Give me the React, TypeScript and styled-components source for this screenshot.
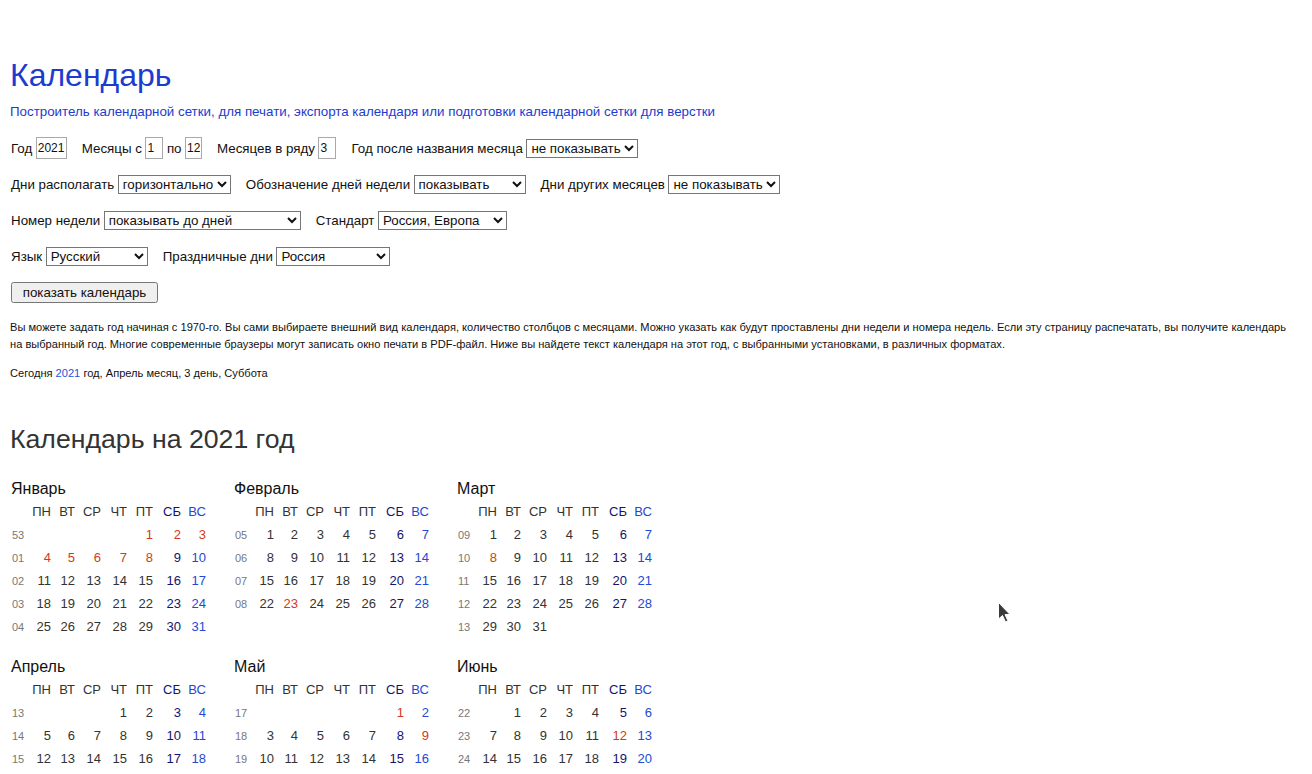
import React from 'react';
import styled, { createGlobalStyle } from 'styled-components';

const GlobalStyle = createGlobalStyle`
  html, body {
    margin: 0;
    padding: 0;
    background: #fff;
  }
  body {
    font-family: "Liberation Sans", Arial, sans-serif;
    color: #111;
  }
`;

const Page = styled.div`
  position: relative;
  padding: 57px 10px 40px 10px;
`;

const Title = styled.h1`
  margin: 0;
  font-size: 32px;
  line-height: 37px;
  font-weight: normal;
  color: #1d3bcf;
`;

const Subtitle = styled.div`
  margin-top: 10px;
  font-size: 13.33px;
  line-height: 15px;
  color: #1d3bcf;
`;

const Form = styled.form`
  margin: 18px 0 0 1px;
  display: flex;
  flex-direction: column;
  gap: 14px;
`;

const FormRow = styled.div`
  height: 22px;
  display: flex;
  align-items: center;
  gap: 15px;
`;

const Field = styled.label`
  display: flex;
  align-items: center;
  gap: 3.5px;
  font-size: 13.33px;
  color: #111;
  white-space: nowrap;
`;

const NumInput = styled.input<{ $w: number }>`
  box-sizing: border-box;
  width: ${p => p.$w}px;
  height: 22px;
  padding: 0 1px;
  border: 1px solid #a9a9a9;
  font-family: "Liberation Sans", Arial, sans-serif;
  font-size: 12px;
  color: #111;
`;

const Select = styled.select<{ $w: number }>`
  box-sizing: border-box;
  width: ${p => p.$w}px;
  height: 19px;
  font-family: "Liberation Sans", Arial, sans-serif;
  font-size: 13.33px;
  color: #111;
  background: #fff;
`;

const Button = styled.button`
  box-sizing: border-box;
  width: 147px;
  height: 21px;
  font-family: "Liberation Sans", Arial, sans-serif;
  font-size: 13.33px;
  color: #111;
`;

const Note = styled.p<{ $top: number }>`
  margin: ${p => p.$top}px 0 0 0;
  max-width: 1284px;
  font-size: 11.1px;
  line-height: 17px;
  color: #111;
`;

const YearLink = styled.a`
  color: #1c55d8;
  text-decoration: none;
`;

const YearHeading = styled.h2`
  margin: 42px 0 0 0;
  font-size: 26.67px;
  line-height: 30px;
  font-weight: normal;
  color: #333;
`;

const Months = styled.div`
  margin-top: 23px;
  padding-left: 1px;
  display: grid;
  grid-template-columns: repeat(3, 197px);
  column-gap: 26px;
  row-gap: 17px;
  align-items: start;
`;

const MonthTable = styled.div`
  display: grid;
  grid-template-columns: 18px 24px 24px 26px 26px 26px 28px 25px;
  grid-auto-rows: 23px;
  align-items: center;
`;

const MonthName = styled.div`
  grid-column: 1 / -1;
  font-size: 16px;
  color: #111;
`;

type Tone = 'work' | 'sat' | 'sun' | 'holiday';

const toneColor: Record<Tone, string> = {
  work: '#333',
  sat: '#14146e',
  sun: '#2449d4',
  holiday: '#d23a1c',
};

const DayCell = styled.div<{ $tone: Tone }>`
  text-align: right;
  padding-right: 2px;
  font-size: 13px;
  color: ${p => toneColor[p.$tone]};
`;

const WeekCell = styled.div`
  padding-left: 1px;
  font-size: 11px;
  color: #777;
`;

const Cursor = styled.svg`
  position: absolute;
  left: 997px;
  top: 601px;
`;

const YEAR = 2021;
const MONTH_NAMES = [
  'Январь', 'Февраль', 'Март', 'Апрель', 'Май', 'Июнь',
  'Июль', 'Август', 'Сентябрь', 'Октябрь', 'Ноябрь', 'Декабрь',
];
const DAY_NAMES = ['ПН', 'ВТ', 'СР', 'ЧТ', 'ПТ', 'СБ', 'ВС'];

// month index -> holiday days
const HOLIDAYS: Record<number, number[]> = {
  0: [1, 2, 3, 4, 5, 6, 7, 8],
  1: [23],
  2: [8],
  4: [1, 9],
  5: [12],
  10: [4],
};

const DAY_MS = 86400000;

const isoWeek = (y: number, m: number, d: number): number => {
  const date = new Date(Date.UTC(y, m, d));
  const dow = (date.getUTCDay() + 6) % 7;
  const thursday = new Date(date.getTime() + (3 - dow) * DAY_MS);
  const yearStart = Date.UTC(thursday.getUTCFullYear(), 0, 1);
  return 1 + Math.floor((thursday.getTime() - yearStart) / (7 * DAY_MS));
};

const buildWeeks = (m: number) => {
  const first = new Date(Date.UTC(YEAR, m, 1));
  const offset = (first.getUTCDay() + 6) % 7;
  const daysInMonth = new Date(Date.UTC(YEAR, m + 1, 0)).getUTCDate();
  const cells: (number | null)[] = [];
  for (let i = 0; i < offset; i++) cells.push(null);
  for (let d = 1; d <= daysInMonth; d++) cells.push(d);
  while (cells.length % 7) cells.push(null);
  const weeks: { num: number; days: (number | null)[] }[] = [];
  for (let i = 0; i < cells.length; i += 7) {
    const days = cells.slice(i, i + 7);
    const firstDay = days.find(x => x !== null) as number;
    weeks.push({ num: isoWeek(YEAR, m, firstDay), days });
  }
  return weeks;
};

const toneFor = (m: number, day: number, col: number): Tone => {
  if ((HOLIDAYS[m] || []).includes(day)) return 'holiday';
  if (col === 5) return 'sat';
  if (col === 6) return 'sun';
  return 'work';
};

const Month: React.FC<{ m: number }> = ({ m }) => (
  <MonthTable>
    <MonthName>{MONTH_NAMES[m]}</MonthName>
    <WeekCell />
    {DAY_NAMES.map((n, i) => (
      <DayCell key={n} $tone={i === 5 ? 'sat' : i === 6 ? 'sun' : 'work'}>{n}</DayCell>
    ))}
    {buildWeeks(m).map(w => (
      <React.Fragment key={w.num}>
        <WeekCell>{String(w.num).padStart(2, '0')}</WeekCell>
        {w.days.map((d, i) => (
          <DayCell key={i} $tone={d ? toneFor(m, d, i) : 'work'}>{d ?? ''}</DayCell>
        ))}
      </React.Fragment>
    ))}
  </MonthTable>
);

const App: React.FC = () => (
  <Page>
    <GlobalStyle />
    <Title>Календарь</Title>
    <Subtitle>
      Построитель календарной сетки, для печати, экспорта календаря или подготовки календарной сетки для верстки
    </Subtitle>

    <Form onSubmit={e => e.preventDefault()}>
      <FormRow>
        <Field>Год <NumInput $w={31} defaultValue="2021" /></Field>
        <Field>
          Месяцы с <NumInput $w={18} defaultValue="1" /> по <NumInput $w={17} defaultValue="12" />
        </Field>
        <Field>Месяцев в ряду <NumInput $w={18} defaultValue="3" /></Field>
        <Field>
          Год после названия месяца
          <Select $w={112} defaultValue="no"><option value="no">не показывать</option></Select>
        </Field>
      </FormRow>
      <FormRow>
        <Field>
          Дни располагать
          <Select $w={113} defaultValue="h"><option value="h">горизонтально</option></Select>
        </Field>
        <Field>
          Обозначение дней недели
          <Select $w={112} defaultValue="y"><option value="y">показывать</option></Select>
        </Field>
        <Field>
          Дни других месяцев
          <Select $w={112} defaultValue="no"><option value="no">не показывать</option></Select>
        </Field>
      </FormRow>
      <FormRow>
        <Field>
          Номер недели
          <Select $w={197} defaultValue="b"><option value="b">показывать до дней</option></Select>
        </Field>
        <Field>
          Стандарт
          <Select $w={129} defaultValue="ru"><option value="ru">Россия, Европа</option></Select>
        </Field>
      </FormRow>
      <FormRow>
        <Field>
          Язык
          <Select $w={102} defaultValue="ru"><option value="ru">Русский</option></Select>
        </Field>
        <Field>
          Праздничные дни
          <Select $w={114} defaultValue="ru"><option value="ru">Россия</option></Select>
        </Field>
      </FormRow>
      <FormRow>
        <Button type="submit">показать календарь</Button>
      </FormRow>
    </Form>

    <Note $top={16}>
      Вы можете задать год начиная с 1970-го. Вы сами выбираете внешний вид календаря, количество столбцов с месяцами.
      Можно указать как будут проставлены дни недели и номера недель. Если эту страницу распечатать, вы получите
      календарь на выбранный год. Многие современные браузеры могут записать окно печати в PDF-файл. Ниже вы найдете
      текст календаря на этот год, с выбранными установками, в различных форматах.
    </Note>
    <Note $top={12}>
      Сегодня <YearLink href="#">2021</YearLink> год, Апрель месяц, 3 день, Суббота
    </Note>

    <YearHeading>Календарь на 2021 год</YearHeading>
    <Months>
      {MONTH_NAMES.map((_, m) => <Month key={m} m={m} />)}
    </Months>

    <Cursor width="16" height="24" viewBox="0 0 16 24">
      <path d="M1.5 1.5 L1.5 18 L5.5 14.5 L8.5 21 L11 20 L8 13.5 L13 13.5 Z" fill="#3a3a3a" stroke="#fff" strokeWidth="1" />
    </Cursor>
  </Page>
);

export default App;
